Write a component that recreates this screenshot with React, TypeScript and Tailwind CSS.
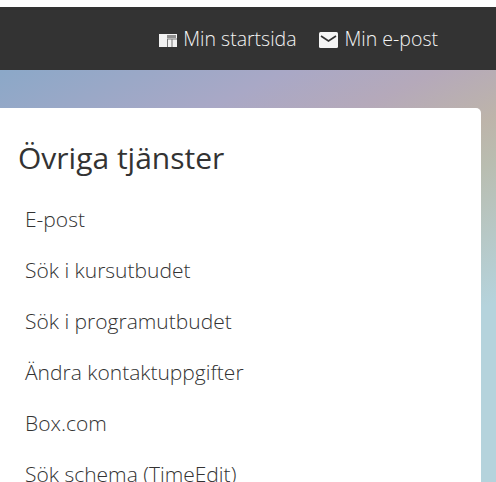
export default function App() {
  const items = ["E-post", "Sök i kursutbudet", "Sök i programutbudet", "Ändra kontaktuppgifter", "Box.com", "Sök schema (TimeEdit)"];
  return (
    <div className="h-[482px] w-[496px] overflow-hidden bg-white font-['Open_Sans',sans-serif]">
      <div className="mt-[7px] flex h-[63px] items-center justify-end bg-[#333333] pr-[58px] text-[19.5px] font-light text-[#f4f4f4]">
        <a className="flex items-center">
          <svg width="18" height="13" viewBox="0 0 18 13" className="mr-[6px] mt-[3px]">
            <rect width="18" height="13" fill="#f2f2f2" />
            <rect x="8" y="1" width="9" height="3" fill="#8f8f8f" />
            <path d="M8 5h10M8.5 5v8M13 5v8" stroke="#777" strokeWidth="1" fill="none" />
          </svg>
          Min startsida
        </a>
        <a className="ml-[22px] flex items-center">
          <svg width="19" height="16" viewBox="0 0 19 16" className="mr-[7px] mt-[3px]">
            <rect width="19" height="16" rx="1.5" fill="#f5f5f5" />
            <path d="M2 4 L9.5 9 L17 4" stroke="#333" strokeWidth="1.6" fill="none" />
          </svg>
          Min e-post
        </a>
      </div>
      <div className="h-[412px] bg-[linear-gradient(155deg,#8ba8c8_0%,#a9a8c6_21%,#b5a9ba_32%,#bdb4aa_43%,#b9bdb0_50%,#b5d3dc_72%)] pt-[38px]">
        <div className="h-[400px] w-[481px] rounded-tr-[5px] bg-white pl-[18px] pt-[30px] text-[#333333]">
          <h2 className="text-[30px] font-normal leading-[40px]">Övriga tjänster</h2>
          <ul className="mt-[16px] pl-[7px] text-[21px] font-light leading-[51px]">
            {items.map((t) => (
              <li key={t}>{t}</li>
            ))}
          </ul>
        </div>
      </div>
    </div>
  );
}
